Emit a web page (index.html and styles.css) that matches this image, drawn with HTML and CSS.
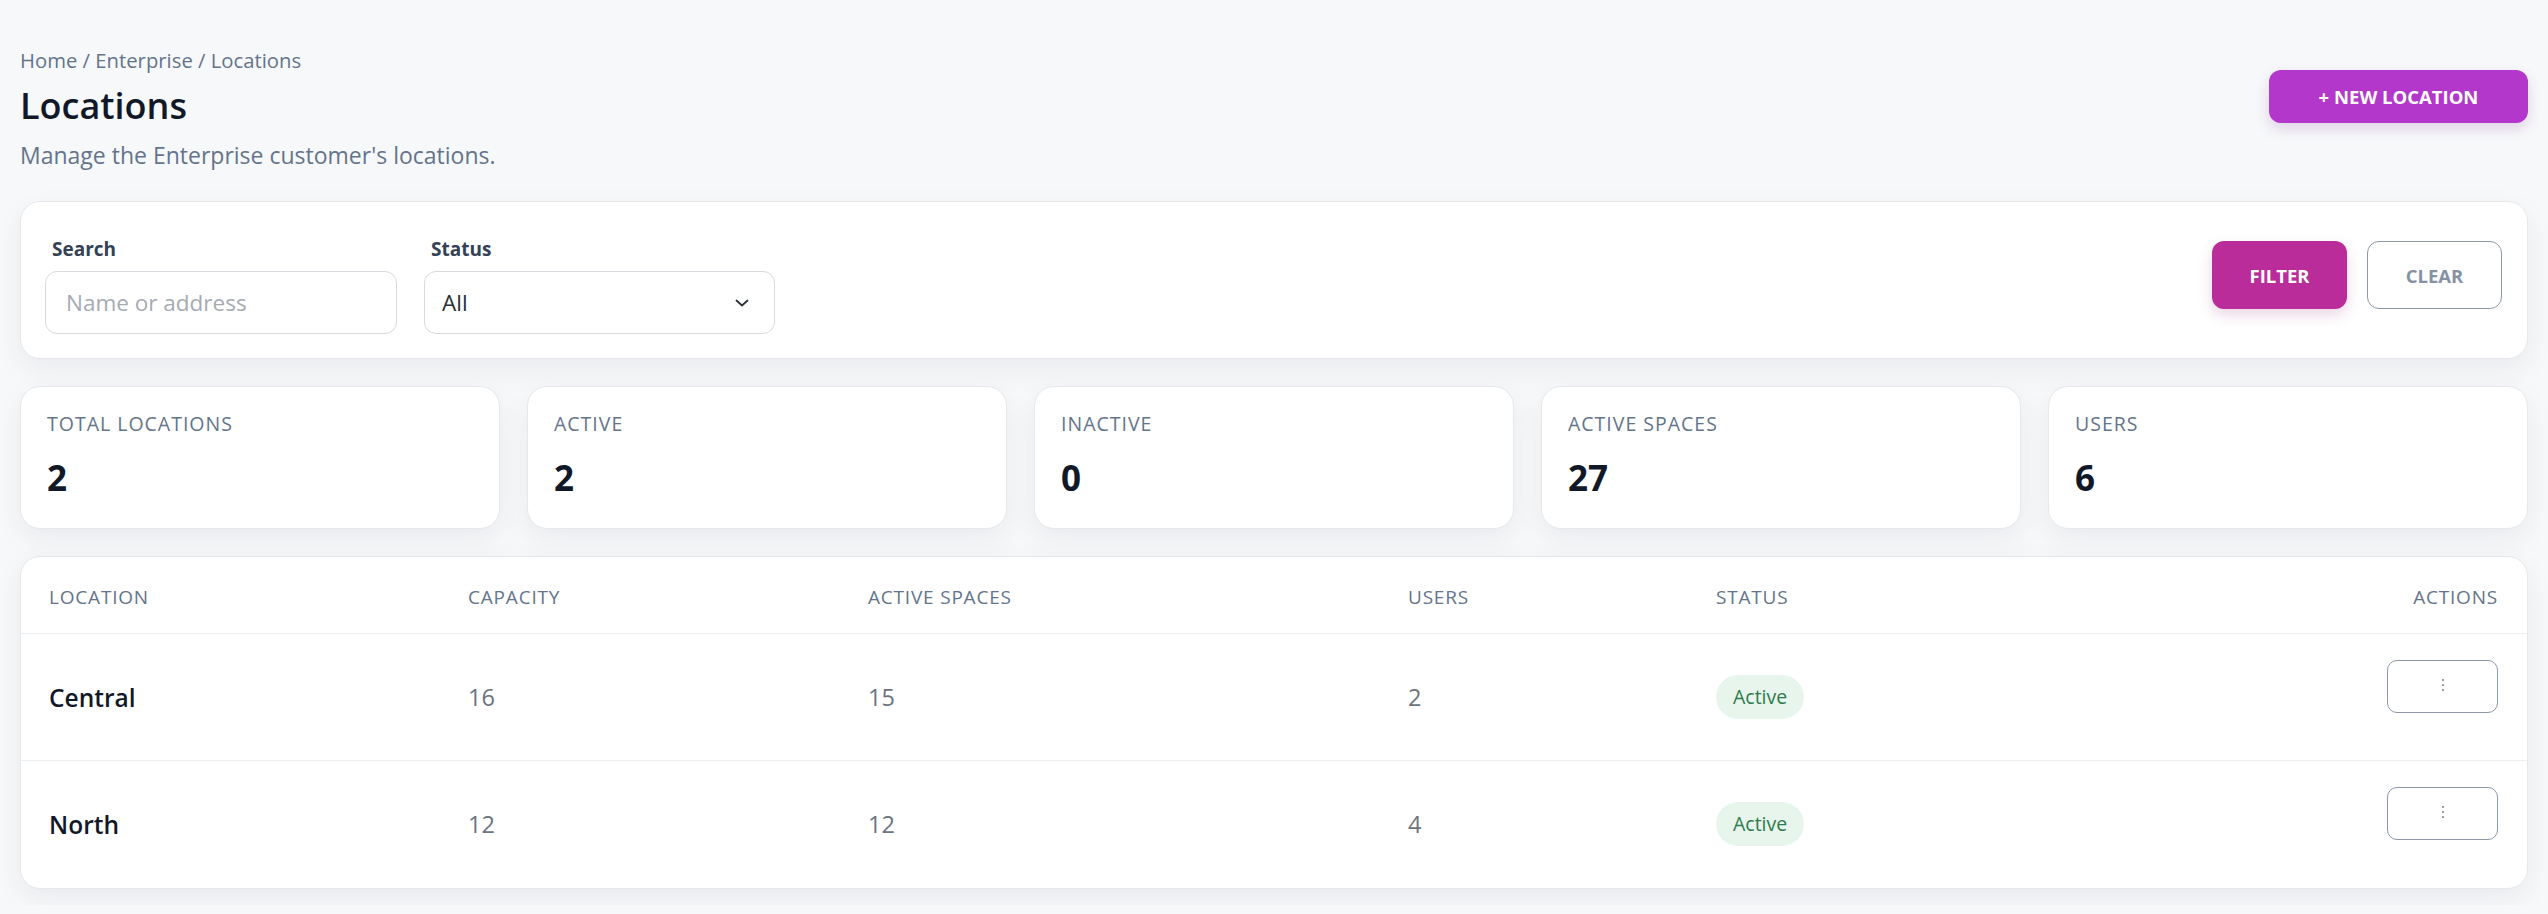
FILE: index.html
```html
<!DOCTYPE html>
<html lang="en">
  <head>
    <meta charset="UTF-8" />
    <meta name="viewport" content="width=device-width, initial-scale=1.0" />
    <title>Locations</title>
    <link rel="stylesheet" href="styles.css">
  </head>
  <body>
    <div class="page">
      <div class="page-header">
        <div>
          <div class="breadcrumb">Home / Enterprise / Locations</div>
          <h1>Locations</h1>
          <p class="subtitle">Manage the Enterprise customer's locations.</p>
        </div>
        <button class="btn-new">+ NEW LOCATION</button>
      </div>

      <div class="card filters">
        <div class="field">
          <label for="search">Search</label>
          <input type="text" id="search" placeholder="Name or address" />
        </div>
        <div class="field">
          <label for="status">Status</label>
          <div class="select">
            <span>All</span>
            <svg width="14" height="8" viewBox="0 0 14 8">
              <polyline points="1.5,1.5 7,6.5 12.5,1.5" fill="none" stroke="#2b2f36" stroke-width="1.8" stroke-linecap="round" stroke-linejoin="round" />
            </svg>
          </div>
        </div>
        <div class="filter-actions">
          <button class="btn-filter">FILTER</button>
          <button class="btn-clear">CLEAR</button>
        </div>
      </div>

      <div class="stats">
        <div class="card stat">
          <div class="stat-label">Total locations</div>
          <div class="stat-value">2</div>
        </div>
        <div class="card stat">
          <div class="stat-label">Active</div>
          <div class="stat-value">2</div>
        </div>
        <div class="card stat">
          <div class="stat-label">Inactive</div>
          <div class="stat-value">0</div>
        </div>
        <div class="card stat">
          <div class="stat-label">Active spaces</div>
          <div class="stat-value">27</div>
        </div>
        <div class="card stat">
          <div class="stat-label">Users</div>
          <div class="stat-value">6</div>
        </div>
      </div>

      <div class="card table-card">
        <table>
          <colgroup>
            <col style="width: 419px" />
            <col style="width: 400px" />
            <col style="width: 540px" />
            <col style="width: 308px" />
            <col style="width: 386px" />
            <col />
          </colgroup>
          <thead>
            <tr>
              <th>Location</th>
              <th>Capacity</th>
              <th>Active spaces</th>
              <th>Users</th>
              <th>Status</th>
              <th class="right">Actions</th>
            </tr>
          </thead>
          <tbody>
            <tr>
              <td class="name">Central</td>
              <td>16</td>
              <td>15</td>
              <td>2</td>
              <td><span class="badge">Active</span></td>
              <td class="actions">
                <button class="btn-more">
                  <svg width="4" height="14" viewBox="0 0 4 14"><circle cx="2" cy="2" r="1.1" /><circle cx="2" cy="7" r="1.1" /><circle cx="2" cy="12" r="1.1" /></svg>
                </button>
              </td>
            </tr>
            <tr>
              <td class="name">North</td>
              <td>12</td>
              <td>12</td>
              <td>4</td>
              <td><span class="badge">Active</span></td>
              <td class="actions">
                <button class="btn-more">
                  <svg width="4" height="14" viewBox="0 0 4 14"><circle cx="2" cy="2" r="1.1" /><circle cx="2" cy="7" r="1.1" /><circle cx="2" cy="12" r="1.1" /></svg>
                </button>
              </td>
            </tr>
          </tbody>
        </table>
      </div>
    </div>
  </body>
</html>
```

FILE: styles.css
```css
body {
  margin: 0;
  font-family: "Open Sans", "Noto Sans", sans-serif;
  background-color: #f7f8fa;
  color: #0f172a;
}

.page {
  padding: 47px 20px 16px;
}

.page-header {
  display: flex;
  justify-content: space-between;
  align-items: flex-start;
  margin-bottom: 31px;
}

.breadcrumb {
  font-size: 20.3px;
  line-height: 26px;
  color: #64748b;
}

h1 {
  margin: 8px 0 0;
  font-size: 36px;
  line-height: 50px;
  font-weight: 600;
  color: #111827;
}

.subtitle {
  margin: 9px 0 0;
  font-size: 23px;
  line-height: 30px;
  color: #64748b;
}

button {
  font-family: inherit;
  cursor: pointer;
}

.btn-new {
  margin-top: 23px;
  width: 259px;
  height: 53px;
  border: none;
  border-radius: 12px;
  background-color: #b237ca;
  color: #fff;
  font-size: 18.5px;
  font-weight: 700;
  box-shadow: 0 6px 14px rgba(120, 40, 140, 0.18);
}

.card {
  background-color: #fff;
  border: 1px solid #e6e8ec;
  border-radius: 20px;
  box-shadow: 0 10px 30px rgba(15, 23, 42, 0.06);
}

.filters {
  display: flex;
  align-items: flex-start;
  gap: 27px;
  padding: 34px 25px 24px 24px;
  margin-bottom: 27px;
}

.field {
  display: flex;
  flex-direction: column;
}

.field label {
  font-size: 19px;
  line-height: 26px;
  font-weight: 700;
  color: #334155;
  margin: 0 0 9px 7px;
}

.field input,
.select {
  box-sizing: border-box;
  width: 352px;
  height: 63px;
  border: 1px solid #d6d9de;
  border-radius: 12px;
  font-family: inherit;
  font-size: 22.5px;
  color: #2b2f36;
  background: #fff;
}

.field input {
  padding: 0 20px;
  outline: none;
}

.field input::placeholder {
  color: #a6abb3;
}

.select {
  width: 351px;
  display: flex;
  align-items: center;
  justify-content: space-between;
  padding: 0 25px 0 17px;
}

.filter-actions {
  margin-left: auto;
  margin-top: 5px;
  display: flex;
  gap: 20px;
}

.btn-filter,
.btn-clear {
  width: 135px;
  height: 68px;
  border-radius: 12px;
  font-size: 18.5px;
  font-weight: 700;
}

.btn-filter {
  border: none;
  background-color: #bb2c9b;
  color: #fff;
  box-shadow: 0 6px 14px rgba(140, 30, 110, 0.18);
}

.btn-clear {
  border: 1.5px solid #8d98a8;
  background-color: #fff;
  color: #8691a3;
}

.stats {
  display: grid;
  grid-template-columns: repeat(5, 1fr);
  gap: 27px;
  margin-bottom: 27px;
}

.stat {
  padding: 24px 26px 26px;
}

.stat-label {
  font-size: 19.5px;
  line-height: 26px;
  letter-spacing: 1px;
  text-transform: uppercase;
  color: #64748b;
}

.stat-value {
  margin-top: 17px;
  font-size: 35px;
  line-height: 48px;
  font-weight: 700;
  color: #111827;
}

.table-card {
  overflow: hidden;
}

table {
  width: 100%;
  border-collapse: collapse;
  table-layout: fixed;
}

th {
  padding: 28px 28px 24px;
  font-size: 19px;
  line-height: 24px;
  font-weight: 400;
  letter-spacing: 0.8px;
  text-transform: uppercase;
  text-align: left;
  color: #64748b;
  border-bottom: 1px solid #eceef2;
}

th.right {
  text-align: right;
  padding-right: 29px;
}

td {
  height: 127px;
  padding: 0 28px;
  font-size: 23.5px;
  color: #6b7280;
  border-bottom: 1px solid #eceef2;
  box-sizing: border-box;
}

tbody tr:last-child td {
  border-bottom: none;
}

td.name {
  font-size: 24.5px;
  font-weight: 600;
  color: #111827;
}

.badge {
  display: inline-block;
  padding: 0 17px;
  line-height: 44px;
  border-radius: 22px;
  background-color: #e7f5ec;
  color: #2e7a4c;
  font-size: 19.5px;
}

td.actions {
  text-align: right;
  vertical-align: top;
  padding: 26px 29px 0 0;
}

.btn-more {
  width: 111px;
  height: 53px;
  border: 1.5px solid #8d98a8;
  border-radius: 10px;
  background-color: #fff;
  fill: #7d8798;
  padding: 0;
}
```
